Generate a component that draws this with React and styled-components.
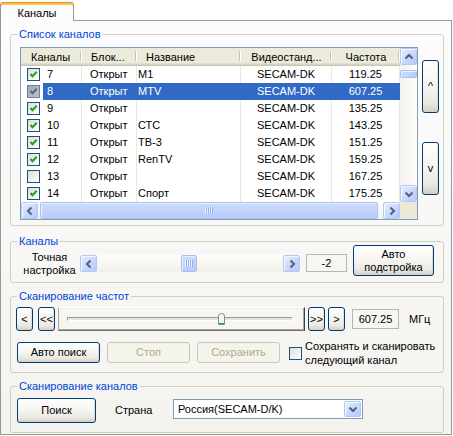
import React from 'react';
import styled, { createGlobalStyle } from 'styled-components';

const FONT = `"Liberation Sans", Arial, sans-serif`;

const Global = createGlobalStyle`
  html, body { margin: 0; padding: 0; background: #ffffff; }
  body { font-family: ${FONT}; font-size: 11px; color: #000; }
  * { box-sizing: border-box; }
`;

const Window = styled.div`
  width: 453px;
  height: 436px;
  background: #ffffff;
  font-family: ${FONT};
  font-size: 11px;
  overflow: hidden;
`;

const TabStrip = styled.div`
  height: 20px;
  display: flex;
  align-items: flex-end;
`;

const Tab = styled.div`
  position: relative;
  z-index: 1;
  width: 74px;
  height: 19px;
  margin-bottom: -1px;
  background: #fcfcfe;
  border: 1px solid #919b9c;
  border-top: 1px solid #e68b2c;
  border-bottom: none;
  border-radius: 3px 3px 0 0;
  box-shadow: inset 0 2px 0 #ffc83c;
  display: flex;
  align-items: center;
  justify-content: center;
  padding-top: 1px;
`;

const Panel = styled.div`
  width: 452px;
  height: 415px;
  border: 1px solid #919b9c;
  background: linear-gradient(#fcfcfe, #f4f3ee);
  padding-left: 9px;
  display: flex;
  flex-direction: column;
  overflow: hidden;
`;

const Group = styled.fieldset`
  margin: ${p => p.$mt}px 0 0 0;
  padding: 0;
  width: 434px;
  min-inline-size: 0;
  border: 1px solid #d0d0bf;
  border-radius: 3px;
`;

const Legend = styled.legend`
  margin-left: 6px;
  padding: 0 2px;
  color: #0046d5;
  font-size: 11px;
  line-height: 13px;
`;

const GroupBody = styled.div`
  display: flex;
  flex-direction: ${p => p.$dir || 'row'};
  align-items: ${p => p.$align || 'flex-start'};
  gap: ${p => p.$gap || 0}px;
  padding: ${p => p.$pad};
  margin-top: ${p => p.$mt || 0}px;
`;

/* ---------- list view ---------- */

const ListView = styled.div`
  width: 398px;
  height: 173px;
  border: 1px solid #7f9db9;
  background: #ffffff;
  display: grid;
  grid-template-columns: 379px 17px;
  grid-template-rows: 154px 17px;
`;

const ListMain = styled.div`
  display: flex;
  flex-direction: column;
  overflow: hidden;
`;

const HeaderRow = styled.div`
  display: flex;
  height: 18px;
  flex: none;
  background: #ebeadb;
  box-shadow: inset 0 -1px 0 #cbc7b8, inset 0 -2px 0 #d6d2c2, inset 0 -3px 0 #e2decd;
`;

const HeaderCell = styled.div`
  position: relative;
  flex: none;
  width: ${p => p.$w}px;
  padding-left: ${p => p.$pl || 0}px;
  padding-top: 1px;
  line-height: 16px;
  text-align: ${p => p.$align || 'left'};
  white-space: nowrap;
  overflow: hidden;
  &::after {
    content: '';
    position: absolute;
    right: 1px;
    top: 3px;
    bottom: 5px;
    width: 1px;
    background: #c7c5b2;
    box-shadow: 1px 0 0 #ffffff;
  }
`;

const Row = styled.div`
  display: flex;
  height: 17px;
  flex: none;
`;

const Cell = styled.div`
  flex: none;
  width: ${p => p.$w}px;
  height: 17px;
  line-height: 17px;
  padding-left: ${p => p.$pl || 0}px;
  text-align: ${p => p.$align || 'left'};
  white-space: nowrap;
  overflow: hidden;
  border-right: 1px solid ${p => (p.$sel ? '#316ac5' : '#ece9d8')};
  background: ${p => (p.$sel ? '#316ac5' : 'transparent')};
  color: ${p => (p.$sel ? '#ffffff' : '#000000')};
`;

const FirstCell = styled.div`
  flex: none;
  width: ${p => p.$w}px;
  height: 17px;
  display: flex;
  align-items: center;
  border-right: 1px solid ${p => (p.$sel ? '#316ac5' : '#ece9d8')};
`;

const NumLabel = styled.div`
  flex: 1;
  height: 17px;
  line-height: 17px;
  margin-left: 3px;
  padding-left: 4px;
  background: ${p => (p.$sel ? '#316ac5' : 'transparent')};
  color: ${p => (p.$sel ? '#ffffff' : '#000000')};
`;

const CheckBox = styled.span`
  flex: none;
  display: inline-flex;
  align-items: center;
  justify-content: center;
  width: 13px;
  height: 13px;
  margin-left: ${p => p.$ml || 0}px;
  margin-top: ${p => p.$mt || 0}px;
  border: 1px solid ${p => (p.$muted ? '#6d7f9c' : '#1c5180')};
  background: ${p =>
    p.$muted ? 'linear-gradient(135deg, #9ea9c2, #b7c0d4)' : 'linear-gradient(135deg, #dcdcd7, #ffffff)'};
`;

/* ---------- scroll bars ---------- */

const VScroll = styled.div`
  grid-column: 2;
  grid-row: 1;
  display: flex;
  flex-direction: column;
  background: linear-gradient(to right, #f3f1ec, #fefefb);
`;

const HScroll = styled.div`
  display: flex;
  flex-direction: row;
  width: ${p => (p.$w ? `${p.$w}px` : 'auto')};
  height: 17px;
  flex: none;
  background: linear-gradient(#fefefb, #f1efe8);
`;

const Corner = styled.div`
  background: #ece9d8;
`;

const ScrollBtn = styled.div`
  flex: none;
  width: 17px;
  height: 17px;
  display: flex;
  align-items: center;
  justify-content: center;
  border: 1px solid #b4c8f5;
  border-radius: 2px;
  background: linear-gradient(135deg, #e6edfe 0%, #c8d8fc 55%, #b6caf7 100%);
  box-shadow: inset 1px 1px 0 #f4f7ff;
`;

const Track = styled.div`
  flex: 1;
  display: flex;
  flex-direction: ${p => (p.$vertical ? 'column' : 'row')};
  align-items: stretch;
`;

const Thumb = styled.div`
  flex: none;
  display: flex;
  align-items: center;
  justify-content: center;
  border: 1px solid #a8bff3;
  border-radius: 2px;
  background: ${p =>
    p.$vertical
      ? 'linear-gradient(to right, #cddbfd, #b9ccf8)'
      : 'linear-gradient(#cddbfd, #b9ccf8)'};
  box-shadow: inset 1px 1px 0 #e8effe;
  ${p => (p.$vertical ? `height: ${p.$len}px; margin-top: ${p.$off}px;` : `width: ${p.$len}px; margin-left: ${p.$off}px;`)}
`;

const Grip = styled.span`
  width: 8px;
  height: 7px;
  background: repeating-linear-gradient(to right, #eef4fe 0 1px, #8cb0f8 1px 2px);
`;

const Arrow = ({ dir, color = '#4d6185' }) => {
  const pts = {
    up: '1.5,6.5 5,3 8.5,6.5',
    down: '1.5,3.5 5,7 8.5,3.5',
    left: '6.5,1.5 3,5 6.5,8.5',
    right: '3.5,1.5 7,5 3.5,8.5',
  }[dir];
  return (
    <svg width="10" height="10" viewBox="0 0 10 10">
      <polyline points={pts} fill="none" stroke={color} strokeWidth="2" />
    </svg>
  );
};

const Check = ({ color = '#21a121' }) => (
  <svg width="11" height="11" viewBox="0 0 11 11">
    <polyline points="2.5,5 4.5,7.2 8.7,2.8" fill="none" stroke={color} strokeWidth="2" />
  </svg>
);

/* ---------- buttons & boxes ---------- */

const XPButton = styled.button`
  flex: none;
  width: ${p => p.$w}px;
  height: ${p => p.$h}px;
  margin: ${p => p.$m || '0'};
  padding: 0;
  font-family: ${FONT};
  font-size: 11px;
  line-height: 13px;
  color: #000000;
  border: 1px solid #003c74;
  border-radius: 3px;
  background: linear-gradient(180deg, #ffffff 0%, #f6f5f1 45%, #ebe9e2 80%, #d6d0c5 100%);
  box-shadow: inset -1px -1px 0 rgba(214, 208, 197, 0.6);
  display: flex;
  align-items: center;
  justify-content: center;
  text-align: center;
  &:disabled {
    border-color: #c9c7ba;
    background: #f5f4ea;
    color: #aca899;
    box-shadow: none;
  }
`;

const SideButtons = styled.div`
  display: flex;
  flex-direction: column;
  gap: 29px;
  margin-top: 13px;
`;

const ValueBox = styled.div`
  flex: none;
  width: ${p => p.$w}px;
  height: ${p => p.$h}px;
  margin: ${p => p.$m || '0'};
  border: 1px solid #b8b6a8;
  display: flex;
  align-items: center;
  justify-content: center;
`;

const FineLabel = styled.div`
  flex: none;
  width: 61px;
  text-align: center;
  line-height: 13px;
  margin-bottom: -1px;
`;

const TrackFrame = styled.div`
  flex: none;
  width: 247px;
  height: 24px;
  display: flex;
  align-items: center;
  padding: 0 11px 0 8px;
  border-top: 1px solid #ffffff;
  border-left: 1px solid #aca899;
  border-right: 1px solid #404040;
  border-bottom: 1px solid #716f64;
  box-shadow: inset -1px -1px 0 #aca899, inset 1px 1px 0 #f1efe2;
`;

const TrackLine = styled.div`
  position: relative;
  flex: 1;
  height: 4px;
  border-top: 1px solid #9d9c99;
  border-left: 1px solid #9d9c99;
  border-bottom: 1px solid #ffffff;
  border-right: 1px solid #ffffff;
  background: #e6e4dc;
`;

const SliderThumb = styled.svg`
  position: absolute;
  top: -5px;
`;

const Row1 = styled.div`
  display: flex;
  align-items: center;
  gap: 3px;
  height: 24px;
`;

const Row2 = styled.div`
  display: flex;
  align-items: flex-start;
  gap: 7px;
  margin-top: 8px;
  margin-left: 1px;
`;

const Unit = styled.span`
  margin-left: 7px;
`;

const CheckLabel = styled.div`
  line-height: 14px;
  margin-left: -4px;
`;

const Text = styled.div`
  flex: none;
  width: ${p => p.$w}px;
  margin: ${p => p.$m || '0'};
  line-height: 13px;
`;

const Combo = styled.div`
  flex: none;
  width: 190px;
  height: 20px;
  margin-top: 1px;
  border: 1px solid #7f9db9;
  background: #ffffff;
  padding: 1px;
  display: flex;
`;

const ComboText = styled.div`
  flex: 1;
  padding-left: 3px;
  line-height: 16px;
  white-space: nowrap;
`;

const ComboBtn = styled(ScrollBtn)`
  height: 16px;
`;

/* ---------- data ---------- */

const cols = [
  { w: 61, hpl: 10 },
  { w: 55, pl: 8, hpl: 9 },
  { w: 104, pl: 1, hpl: 9 },
  { w: 91, align: 'center' },
  { w: 68, align: 'center' },
];

const headers = ['Каналы', 'Блок...', 'Название', 'Видеостанд...', 'Частота'];

const rows = [
  { n: 7, on: true, name: 'M1', f: '119.25' },
  { n: 8, on: true, name: 'MTV', f: '607.25', sel: true },
  { n: 9, on: true, name: '', f: '135.25' },
  { n: 10, on: true, name: 'СТС', f: '143.25' },
  { n: 11, on: true, name: 'ТВ-3', f: '151.25' },
  { n: 12, on: true, name: 'RenTV', f: '159.25' },
  { n: 13, on: false, name: '', f: '167.25' },
  { n: 14, on: true, name: 'Спорт', f: '175.25' },
];

const sliderPos = 0.681;

export default function App() {
  return (
    <>
      <Global />
      <Window>
        <TabStrip>
          <Tab>Каналы</Tab>
        </TabStrip>
        <Panel>
          <Group $mt={7}>
            <Legend>Список каналов</Legend>
            <GroupBody $gap={4} $pad="6px 4px 5px 9px">
              <ListView>
                <ListMain>
                  <HeaderRow>
                    {headers.map((h, i) => (
                      <HeaderCell key={h} $w={cols[i].w} $pl={cols[i].hpl} $align={cols[i].align}>
                        {h}
                      </HeaderCell>
                    ))}
                  </HeaderRow>
                  {rows.map(r => (
                    <Row key={r.n}>
                      <FirstCell $w={cols[0].w} $sel={r.sel}>
                        <CheckBox $ml={6} $muted={r.sel}>
                          {r.on && <Check color={r.sel ? '#5f6570' : '#21a121'} />}
                        </CheckBox>
                        <NumLabel $sel={r.sel}>{r.n}</NumLabel>
                      </FirstCell>
                      <Cell $w={cols[1].w} $pl={cols[1].pl} $sel={r.sel}>Открыт</Cell>
                      <Cell $w={cols[2].w} $pl={cols[2].pl} $sel={r.sel}>{r.name}</Cell>
                      <Cell $w={cols[3].w} $align="center" $sel={r.sel}>SECAM-DK</Cell>
                      <Cell $w={cols[4].w} $align="center" $sel={r.sel}>{r.f}</Cell>
                    </Row>
                  ))}
                </ListMain>
                <VScroll>
                  <ScrollBtn><Arrow dir="up" /></ScrollBtn>
                  <Track $vertical>
                    <Thumb $vertical $len={8} $off={5} />
                  </Track>
                  <ScrollBtn><Arrow dir="down" /></ScrollBtn>
                </VScroll>
                <HScroll>
                  <ScrollBtn><Arrow dir="left" /></ScrollBtn>
                  <Track>
                    <Thumb $len={338} $off={2}><Grip /></Thumb>
                  </Track>
                  <ScrollBtn><Arrow dir="right" /></ScrollBtn>
                </HScroll>
                <Corner />
              </ListView>
              <SideButtons>
                <XPButton $w={17} $h={53}>^</XPButton>
                <XPButton $w={17} $h={53}>v</XPButton>
              </SideButtons>
            </GroupBody>
          </Group>

          <Group $mt={9}>
            <Legend>Каналы</Legend>
            <GroupBody $align="flex-end" $mt={-3} $pad="0 0 6px 8px">
              <FineLabel>Точная<br />настройка</FineLabel>
              <HScroll $w={220} style={{ marginBottom: 4 }}>
                <ScrollBtn><Arrow dir="left" /></ScrollBtn>
                <Track>
                  <Thumb $len={16} $off={84}><Grip /></Thumb>
                </Track>
                <ScrollBtn><Arrow dir="right" /></ScrollBtn>
              </HScroll>
              <ValueBox $w={41} $h={18} $m="0 0 4px 6px">-2</ValueBox>
              <XPButton $w={81} $h={31} $m="0 0 0 6px">Авто<br />подстройка</XPButton>
            </GroupBody>
          </Group>

          <Group $mt={7}>
            <Legend>Сканирование частот</Legend>
            <GroupBody $dir="column" $align="stretch" $pad="4px 0 5px 5px">
              <Row1>
                <XPButton $w={17} $h={24}>&lt;</XPButton>
                <XPButton $w={17} $h={24} $m="0 0 0 2px">&lt;&lt;</XPButton>
                <TrackFrame>
                  <TrackLine>
                    <SliderThumb
                      width="7"
                      height="12"
                      viewBox="0 0 7 12"
                      style={{ left: `calc(${(sliderPos * 100).toFixed(1)}% - 3px)` }}
                    >
                      <path d="M0.5 3 Q0.5 0.5 3.5 0.5 Q6.5 0.5 6.5 3 V11.5 H0.5 Z" fill="#f5f5f0" stroke="#8c8b85" />
                      <line x1="1" y1="10.5" x2="6" y2="10.5" stroke="#21a121" />
                    </SliderThumb>
                  </TrackLine>
                </TrackFrame>
                <XPButton $w={17} $h={24}>&gt;&gt;</XPButton>
                <XPButton $w={17} $h={24}>&gt;</XPButton>
                <ValueBox $w={47} $h={20} $m="0 0 0 4px">607.25</ValueBox>
                <Unit>МГц</Unit>
              </Row1>
              <Row2>
                <XPButton $w={83} $h={21} $m="3px 0 0 0">Авто поиск</XPButton>
                <XPButton $w={83} $h={21} $m="3px 0 0 0" disabled>Стоп</XPButton>
                <XPButton $w={83} $h={21} $m="3px 0 0 0" disabled>Сохранить</XPButton>
                <CheckBox $ml={2} $mt={8} />
                <CheckLabel>Сохранять и сканировать<br />следующий канал</CheckLabel>
              </Row2>
            </GroupBody>
          </Group>

          <Group $mt={7}>
            <Legend>Сканирование каналов</Legend>
            <GroupBody $pad="5px 0 9px 6px">
              <XPButton $w={79} $h={25}>Поиск</XPButton>
              <Text $w={58} $m="6px 0 0 19px">Страна</Text>
              <Combo>
                <ComboText>Россия(SECAM-D/K)</ComboText>
                <ComboBtn><Arrow dir="down" /></ComboBtn>
              </Combo>
            </GroupBody>
          </Group>
        </Panel>
      </Window>
    </>
  );
}
